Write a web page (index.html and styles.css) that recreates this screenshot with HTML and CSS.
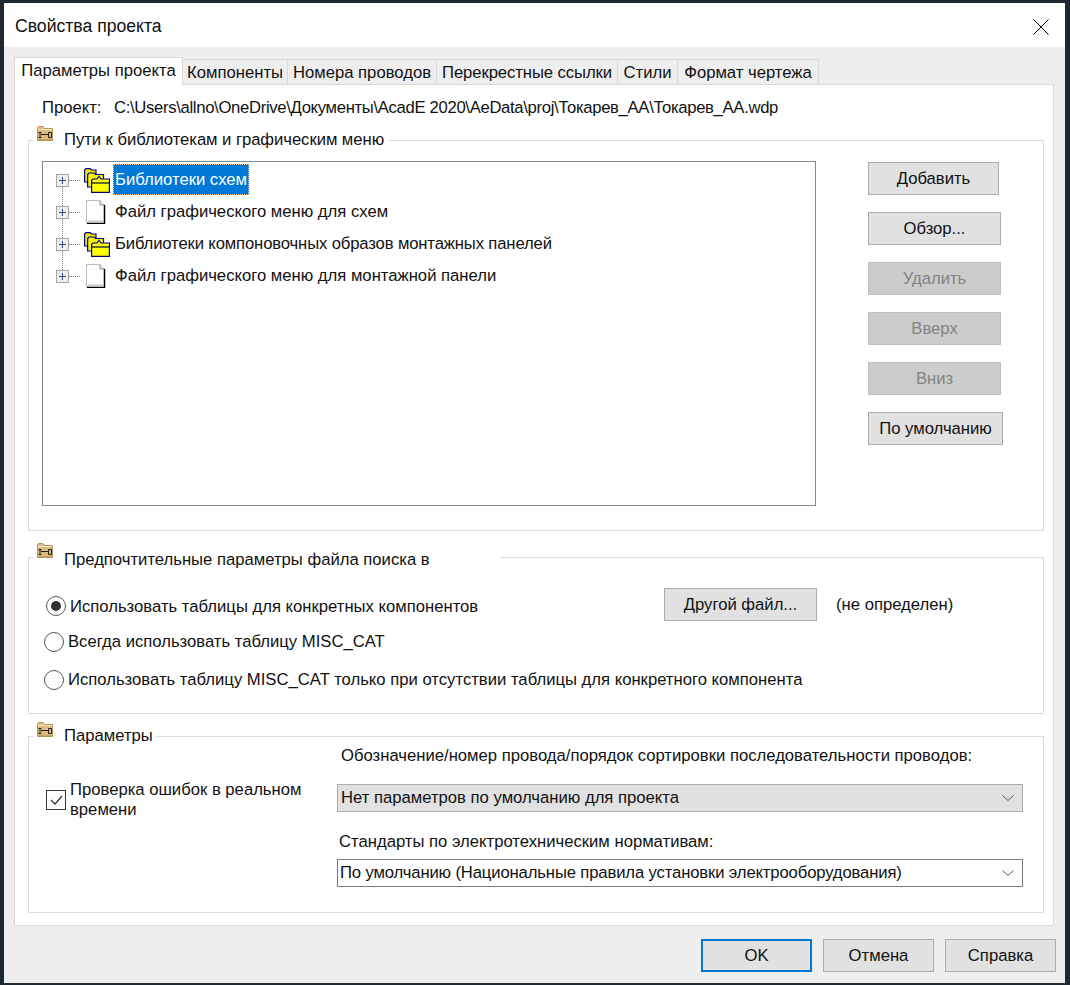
FILE: index.html
```html
<!DOCTYPE html>
<html lang="ru">
<head>
<meta charset="utf-8">
<title>Свойства проекта</title>
<link rel="stylesheet" href="styles.css">
</head>
<body>
<svg class="defs" width="0" height="0">
  <defs>
    <symbol id="gicon" viewBox="0 0 16 15">
      <path d="M.5 14.500V1.500L1.500 .5H6L7.500 2.500H15.500V14.500Z" fill="#dcbc80" stroke="#b4955c"/>
      <path d="M1 3.500H15" stroke="#f6e8c6"/>
      <path d="M1 13.500H15" stroke="#c2a268"/>
      <path d="M1.500 6.500H4.500M3 6.500V11.500M1.500 11.500H4.500M4 8.500H11.500M11.500 6.500H14.500V11.500H11.500Z" stroke="#222" fill="none"/>
    </symbol>
    <symbol id="folders" viewBox="0 0 26 25">
      <g stroke="#000080" stroke-width="1.200" fill="#ffff00">
        <path d="M.6 14V2L2 .6H6L7.500 2H12V14Z" fill="#f0e800"/>
        <path d="M3.600 19V6.500L5 5H10L11.500 6.500H19.500V19Z" fill="#f4ee00"/>
        <path d="M7.600 24.400V12.500L9 11H13L15 8.500L17 11H25.400V24.400Z"/>
        <path d="M8 15H25" stroke="#000040"/>
      </g>
    </symbol>
    <symbol id="doc" viewBox="0 0 20 24">
      <path d="M.5 23V.5H14L18.500 5V23Z" fill="#fff" stroke="#bbb"/>
      <path d="M14 .5V5H18.500" fill="#eee" stroke="#888"/>
      <path d="M18.500 5V23.500H1" fill="none" stroke="#000" stroke-width="1.500"/>
      <path d="M1.500 21.500H17" stroke="#ccc" stroke-width="2"/>
    </symbol>
    <symbol id="expander" viewBox="0 0 13 13">
      <rect x=".5" y=".5" width="12" height="12" fill="#eee" stroke="#a5a5a5"/>
      <path d="M3 6.500H10M6.500 3V10" stroke="#2b4a86"/>
    </symbol>
    <symbol id="chev" viewBox="0 0 12 6">
      <path d="M.5 .5L6 5.500L11.500 .5" fill="none" stroke="#555"/>
    </symbol>
  </defs>
</svg>
<div class="window">
  <header class="titlebar">
    <span class="title">Свойства проекта</span>
    <svg class="close" width="16" height="16" viewBox="0 0 16 16"><path d="M.5 .5L15.500 15.500M15.500 .5L.5 15.500" stroke="#000" fill="none"/></svg>
  </header>
  <div class="client">
    <div class="tabs">
      <div class="tab tab-active">Параметры проекта</div>
      <div class="tab t2">Компоненты</div>
      <div class="tab t3">Номера проводов</div>
      <div class="tab t4">Перекрестные ссылки</div>
      <div class="tab t5">Стили</div>
      <div class="tab t6">Формат чертежа</div>
    </div>
    <main class="panel">
      <div class="project"><span class="project-label">Проект:</span><span class="project-path">C:\Users\allno\OneDrive\Документы\AcadE 2020\AeData\proj\Токарев_АА\Токарев_АА.wdp</span></div>

      <section class="group g-paths">
        <svg class="gicon"><use href="#gicon"/></svg>
        <h2 class="legend legend-paths">Пути к библиотекам и графическим меню</h2>
        <div class="tree">
          <span class="tree-guide"></span>
          <div class="tree-row"><span class="dots"></span><svg class="exp"><use href="#expander"/></svg><svg class="folder"><use href="#folders"/></svg><span class="node node-sel">Библиотеки схем</span></div>
          <div class="tree-row"><span class="dots"></span><svg class="exp"><use href="#expander"/></svg><svg class="doc"><use href="#doc"/></svg><span class="node">Файл графического меню для схем</span></div>
          <div class="tree-row"><span class="dots"></span><svg class="exp"><use href="#expander"/></svg><svg class="folder"><use href="#folders"/></svg><span class="node node-tight">Библиотеки компоновочных образов монтажных панелей</span></div>
          <div class="tree-row"><span class="dots"></span><svg class="exp"><use href="#expander"/></svg><svg class="doc"><use href="#doc"/></svg><span class="node">Файл графического меню для монтажной панели</span></div>
        </div>
        <div class="side-buttons">
          <button class="btn b-add">Добавить</button>
          <button class="btn b-side">Обзор...</button>
          <button class="btn b-side dis">Удалить</button>
          <button class="btn b-side dis">Вверх</button>
          <button class="btn b-side dis">Вниз</button>
          <button class="btn b-def">По умолчанию</button>
        </div>
      </section>

      <section class="group g-search">
        <svg class="gicon"><use href="#gicon"/></svg>
        <h2 class="legend legend-long">Предпочтительные параметры файла поиска в</h2>
        <div class="radio-row r1">
          <span class="radio radio-on"></span><span class="radio-text">Использовать таблицы для конкретных компонентов</span>
          <button class="btn b-other">Другой файл...</button><span class="undefined">(не определен)</span>
        </div>
        <div class="radio-row r2"><span class="radio"></span><span class="radio-text">Всегда использовать таблицу MISC_CAT</span></div>
        <div class="radio-row r3"><span class="radio"></span><span class="radio-text">Использовать таблицу MISC_CAT только при отсутствии таблицы для конкретного компонента</span></div>
      </section>

      <section class="group g-params">
        <svg class="gicon"><use href="#gicon"/></svg>
        <h2 class="legend legend-short">Параметры</h2>
        <div class="check-col">
          <span class="check"><svg width="15" height="12" viewBox="0 0 15 12"><path d="M2 6L6 10L13 2" fill="none" stroke="#333" stroke-width="1.200"/></svg></span>
          <span class="check-text">Проверка ошибок в реальном времени</span>
        </div>
        <div class="select-col">
          <div class="cap c1">Обозначение/номер провода/порядок сортировки последовательности проводов:</div>
          <div class="select sel-grey"><span>Нет параметров по умолчанию для проекта</span><svg class="chev"><use href="#chev"/></svg></div>
          <div class="cap c2">Стандарты по электротехническим нормативам:</div>
          <div class="select sel-tight"><span>По умолчанию (Национальные правила установки электрооборудования)</span><svg class="chev"><use href="#chev"/></svg></div>
        </div>
      </section>
    </main>
    <footer class="footer">
      <button class="btn fb fb-ok">OK</button>
      <button class="btn fb">Отмена</button>
      <button class="btn fb">Справка</button>
    </footer>
  </div>
</div>
</body>
</html>
```
FILE: styles.css
```css
* { box-sizing: border-box; }
html, body { margin: 0; height: 985px; overflow: hidden; }
body {
  background: #1f2730;
  font-family: "Liberation Sans", Arial, sans-serif;
  font-size: 16.67px;
  color: #000;
  padding: 3px 5px 2px 4px;
}
.defs { position: absolute; }
.window { height: 980px; display: flex; flex-direction: column; background: #eeeeee; }
.titlebar { height: 44px; background: #fff; display: flex; align-items: center; justify-content: space-between; padding: 3px 16px 0 11px; flex: none; }
.title { font-size: 17.6px; color: #111; }
.close { display: block; }
.client { flex: 1; padding: 0 11px 0 10px; display: flex; flex-direction: column; }

.tabs { display: flex; height: 37px; padding-top: 10px; align-items: flex-end; position: relative; z-index: 1; }
.tab { height: 25px; padding-top: 3px; border: 1px solid #d9d9d9; border-left: 0; border-bottom: 0; background: #eeeeee; text-align: center; white-space: nowrap; color: #111; }
.tab-active { width: 169px; padding-top: 3px; background: #fff; border-left: 1px solid #d9d9d9; margin-bottom: -1px; height: 28px; }
.t2 { width: 105px; }
.t3 { width: 149px; }
.t4 { width: 181px; letter-spacing: -0.08px; }
.t5 { width: 60px; }
.t6 { width: 141px; }

.panel { height: 842px; background: #fff; border: 1px solid #d9d9d9; padding: 13px 9px 0 13px; flex: none; }
.project { display: flex; height: 20px; line-height: 20px; padding-left: 14px; color: #111; }
.project-label { width: 72px; }
.project-path { letter-spacing: -0.32px; white-space: nowrap; }

.group { position: relative; border: 1px solid #dcdcdc; }
.g-paths { height: 391px; margin-top: 22px; }
.g-search { height: 157px; margin-top: 26px; }
.g-params { height: 177px; margin-top: 22px; display: flex; }
.gicon { position: absolute; left: 8px; top: -15px; width: 16px; height: 15px; z-index: 1; }
.legend { position: absolute; left: 4px; top: -11px; margin: 0; padding: 0 5px 0 31px; background: #fff; font-size: 16.67px; font-weight: 400; line-height: 20px; white-space: nowrap; color: #111; }
.legend-paths { letter-spacing: -0.05px; }
.legend-long { padding-right: 70px; top: -8px; }
.legend-short { padding-right: 3px; }

.tree { position: absolute; left: 13px; top: 20px; width: 774px; height: 345px; border: 1px solid #7f8a93; padding: 2px 0 0 13px; }
.tree-guide { position: absolute; left: 19px; top: 18px; height: 96px; border-left: 1px dotted #777; }
.tree-row { height: 32px; display: flex; align-items: center; position: relative; }
.dots { position: absolute; left: 0; top: 16px; width: 24px; border-top: 1px dotted #777; }
.exp { width: 13px; height: 13px; position: relative; flex: none; }
.folder { width: 26px; height: 25px; margin-left: 15px; flex: none; }
.doc { width: 20px; height: 24px; margin: 0 4px 0 17px; flex: none; }
.node { margin-left: 3px; padding: 0 2px; height: 32px; line-height: 32px; white-space: nowrap; color: #111; }
.node-tight { letter-spacing: -0.14px; }
.node-sel { background: #0078d7; color: #fff; outline: 1px dotted #f5c08a; outline-offset: -1px; height: 31px; line-height: 31px; margin-top: -1px; }

.side-buttons { position: absolute; left: 839px; top: 21px; display: flex; flex-direction: column; gap: 17px; align-items: flex-start; }
.btn { height: 33px; border: 1px solid #adadad; background: #e1e1e1; font-family: inherit; font-size: 16.67px; color: #111; padding: 0; margin: 0; }
.b-add { width: 131px; }
.b-side { width: 133px; }
.b-def { width: 135px; }
.dis { background: #cccccc; color: #838383; border-color: #bfbfbf; }

.radio-row { position: absolute; display: flex; align-items: center; white-space: nowrap; color: #111; }
.r1 { left: 17px; top: 30px; height: 33px; }
.r1 .radio { margin-top: 2px; }
.r2 { left: 15px; top: 73px; height: 22px; }
.r3 { left: 15px; top: 111px; height: 22px; }
.radio { width: 20px; height: 20px; border: 1px solid #555; border-radius: 50%; background: #fff; margin-right: 4px; flex: none; display: flex; align-items: center; justify-content: center; }
.radio-on::after { content: ""; width: 10px; height: 10px; border-radius: 50%; background: #333; }
.r1 .radio-text { width: 594px; padding-top: 4px; }
.b-other { width: 153px; }
.undefined { margin-left: 19px; }

.check-col { width: 308px; flex: none; display: flex; align-items: center; padding: 0 0 0 17px; height: 125px; }
.check { width: 20px; height: 20px; border: 1px solid #333; background: #fff; display: flex; align-items: center; justify-content: center; flex: none; }
.check-text { margin-left: 4px; line-height: 20px; width: 240px; color: #111; }
.select-col { width: 686px; padding-top: 9px; }
.cap { line-height: 20px; white-space: nowrap; color: #111; }
.c1 { padding-left: 4px; }
.c2 { padding-left: 2px; margin-top: 20px; margin-bottom: 7px; }
.select { height: 28px; border: 1px solid #7a7a7a; background: #fff; display: flex; align-items: center; justify-content: space-between; padding: 0 8px 0 2px; color: #111; }
.sel-grey { background: #e1e1e1; border-color: #adadad; margin-top: 18px; padding-left: 3px; }
.sel-tight { letter-spacing: -0.14px; }
.chev { width: 12px; height: 6px; }

.footer { display: flex; justify-content: flex-end; gap: 11px; padding: 13px 0 0 0; margin-right: -2px; }
.fb { width: 111px; }
.fb-ok { border: 2px solid #0078d7; }
```
